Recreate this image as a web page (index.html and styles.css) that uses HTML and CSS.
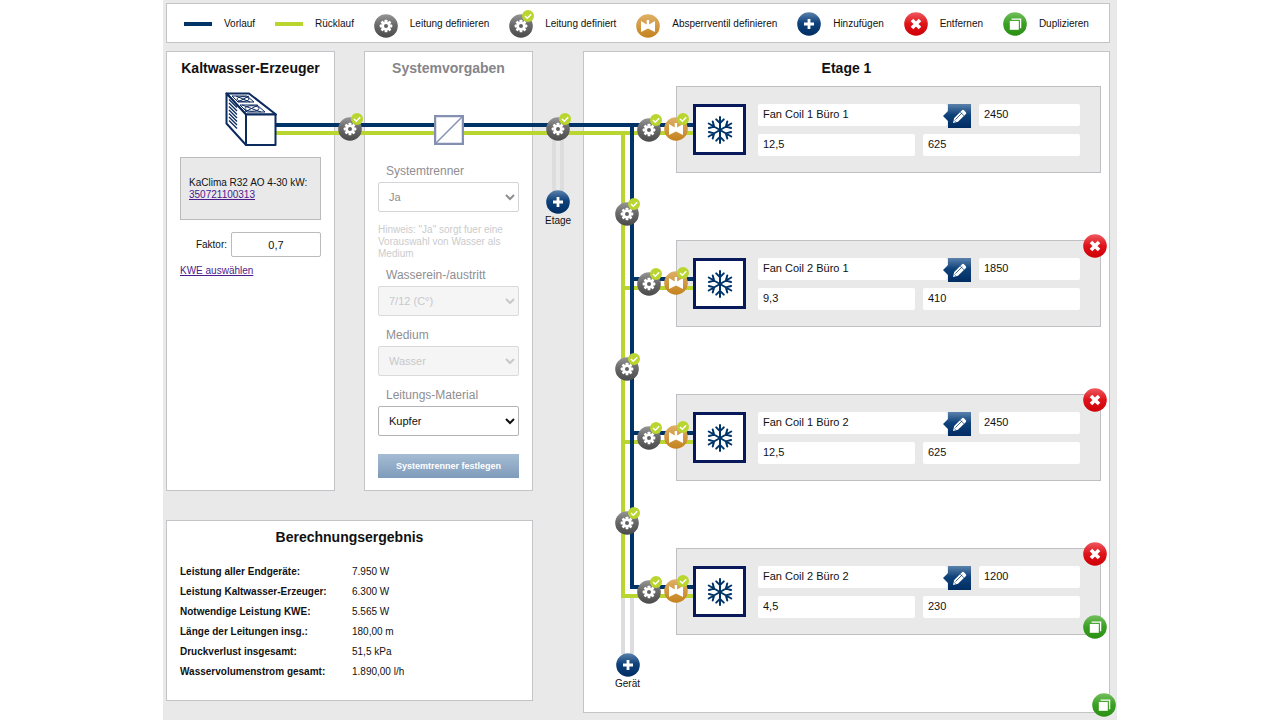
FILE: index.html
```html
<!DOCTYPE html>
<html lang="de">
<head>
<meta charset="utf-8">
<meta name="viewport" content="width=device-width, initial-scale=1">
<title>Kaltwasser-Konfigurator</title>
<link rel="stylesheet" href="styles.css">
</head>
<body>
<svg class="sprite" aria-hidden="true">
  <defs>
    <linearGradient id="g-gray" x1="0" y1="0" x2="0" y2="1"><stop offset="0" stop-color="#969696"/><stop offset=".45" stop-color="#6a6a6a"/><stop offset="1" stop-color="#4b4b4b"/></linearGradient>
    <linearGradient id="g-gold" x1="0" y1="0" x2="0" y2="1"><stop offset="0" stop-color="#deb068"/><stop offset="1" stop-color="#c4821c"/></linearGradient>
    <linearGradient id="g-blue" x1="0" y1="0" x2="0" y2="1"><stop offset="0" stop-color="#5b82ac"/><stop offset=".45" stop-color="#0f427b"/><stop offset="1" stop-color="#002d62"/></linearGradient>
    <linearGradient id="g-red" x1="0" y1="0" x2="0" y2="1"><stop offset="0" stop-color="#ee5a60"/><stop offset=".5" stop-color="#de1219"/><stop offset="1" stop-color="#cf0007"/></linearGradient>
    <linearGradient id="g-green" x1="0" y1="0" x2="0" y2="1"><stop offset="0" stop-color="#73bf5d"/><stop offset=".5" stop-color="#39a022"/><stop offset="1" stop-color="#2b8f14"/></linearGradient>
    <symbol id="tick" viewBox="0 0 12 12"><circle cx="6" cy="6" r="6" fill="#b9d530"/><path d="M3 6l2.300 2.200L9.200 4.300" fill="none" stroke="#fff" stroke-width="1.500"/></symbol>
    <symbol id="gear" viewBox="0 0 24 28">
      <circle cx="12" cy="16" r="11.800" fill="url(#g-gray)"/>
      <g fill="#fff" transform="translate(12 16)">
        <circle r="4.600"/>
        <g id="teeth"><rect x="-1.400" y="-6.300" width="2.800" height="12.600" rx=".6"/><rect x="-6.300" y="-1.400" width="12.600" height="2.800" rx=".6"/></g>
        <use href="#teeth" transform="rotate(45)"/>
        <circle r="2" fill="#626262"/>
      </g>
    </symbol>
    <symbol id="valve" viewBox="0 0 24 28">
      <circle cx="12" cy="16" r="11.800" fill="url(#g-gold)"/>
      <path d="M5 11l5.700 3.600V10h2.400v4.600L19 11V22l-7-3.400L5 22z" fill="#fff"/>
    </symbol>
    <symbol id="plus" viewBox="0 0 24 24"><circle cx="12" cy="12" r="11.800" fill="url(#g-blue)"/><path d="M12 7v10M7 12h10" stroke="#fff" stroke-width="2.800"/></symbol>
    <symbol id="cross" viewBox="0 0 24 24"><circle cx="12" cy="12" r="11.800" fill="url(#g-red)"/><path d="M8 8l8 8M16 8l-8 8" stroke="#fff" stroke-width="3.600"/></symbol>
    <symbol id="copy" viewBox="0 0 24 24"><circle cx="12" cy="12" r="11.800" fill="url(#g-green)"/><path d="M8.600 7.200h9v9" fill="none" stroke="#fff" stroke-width="1.300"/><rect x="6.800" y="9" width="9" height="8.800" fill="#fff"/></symbol>
    <symbol id="pencil" viewBox="0 0 28 24">
      <path d="M0 12l5-5V0h23v24H5v-7z" fill="url(#g-blue)"/>
      <path d="M10 19l1.200-5 7.600-7.600q1.200-1.200 2.400 0l1.500 1.500q1.200 1.200 0 2.400L15 17.800z" fill="#fff"/>
      <path d="M12.400 15.600l6.800-6.800M17.200 8l3.700 3.700M11.200 16.400l1.400 1.400" fill="none" stroke="#0f427b" stroke-width=".8"/>
    </symbol>
    <symbol id="flake" viewBox="0 0 30 30">
      <g fill="none" stroke="#003468" stroke-width="2" stroke-linecap="round">
        <path id="axis" d="M15 2v26M11.200 4.400L15 8.200l3.800-3.800M11.200 25.600l3.800-3.800 3.800 3.800"/>
        <use href="#axis" transform="rotate(60 15 15)"/>
        <use href="#axis" transform="rotate(120 15 15)"/>
      </g>
    </symbol>
  </defs>
</svg>

<div class="app">
  <ul class="legend">
    <li><span class="line supply"></span>Vorlauf</li>
    <li><span class="line return"></span>Rücklauf</li>
    <li><svg class="node-icon"><use href="#gear"/></svg>Leitung definieren</li>
    <li><svg class="node-icon"><use href="#gear"/><use href="#tick" x="13" width="12" height="12"/></svg>Leitung definiert</li>
    <li><svg class="node-icon"><use href="#valve"/></svg>Absperrventil definieren</li>
    <li><svg class="round-icon"><use href="#plus"/></svg>Hinzufügen</li>
    <li><svg class="round-icon"><use href="#cross"/></svg>Entfernen</li>
    <li><svg class="round-icon"><use href="#copy"/></svg>Duplizieren</li>
  </ul>

  <main class="board">
    <div class="left">
      <section class="panel source">
        <h2>Kaltwasser-Erzeuger</h2>
        <svg class="chiller" viewBox="0 0 52 55" aria-hidden="true">
          <g fill="#fff" stroke="#0b2a5e" stroke-width="2" stroke-linejoin="round">
            <path d="M1.500 1.500H24L51 22.500H21z"/>
            <path d="M1.500 1.500L21 22.500V53L1.500 31.500z"/>
            <path d="M21 22.500h29.500V53H21z"/>
          </g>
          <g fill="none" stroke="#0b2a5e" stroke-width="1">
            <path d="M7 4h15l7 6H13zM15 13h17l8 7H22z"/>
            <ellipse cx="18" cy="7" rx="6" ry="2.400"/><path d="M11 4l14 6M24 4L13 10"/>
            <ellipse cx="27" cy="16.500" rx="7" ry="2.800"/><path d="M17 13l19 7M33 13l-13 7"/>
            <path stroke-width="1.300" d="M4 7.500l8 8M4 11l8 8M4 14.500l8 8M4 18l8 8M4 21.500l8 8M4 25l8 8M4 28.500l8 8"/>
          </g>
        </svg>
        <p class="model">KaClima R32 AO 4-30 kW:<br><a href="#modell">350721100313</a></p>
        <div class="factor"><label for="faktor">Faktor:</label><input id="faktor" type="text" value="0,7"></div>
        <a class="choose" href="#kwe">KWE auswählen</a>
      </section>

      <section class="panel system">
        <h2>Systemvorgaben</h2>
        <svg class="separator" viewBox="0 0 30 30" aria-hidden="true"><path d="M1 1h28v28H1z" fill="#fff" stroke="#8490b2" stroke-width="2.500"/><path d="M2 28L28 2" stroke="#8490b2" stroke-width="1.500"/></svg>
        <label for="trenner">Systemtrenner</label>
        <select id="trenner" class="soft"><option>Ja</option></select>
        <p class="hint">Hinweis: "Ja" sorgt fuer eine Vorauswahl von Wasser als Medium</p>
        <label for="wasser">Wasserein-/austritt</label>
        <select id="wasser" disabled><option>7/12 (C°)</option></select>
        <label for="medium">Medium</label>
        <select id="medium" disabled><option>Wasser</option></select>
        <label for="material">Leitungs-Material</label>
        <select id="material"><option>Kupfer</option></select>
        <button class="submit" type="button">Systemtrenner festlegen</button>
      </section>

      <section class="panel result">
        <h2>Berechnungsergebnis</h2>
        <table>
          <tr><th scope="row">Leistung aller Endgeräte:</th><td>7.950 W</td></tr>
          <tr><th scope="row">Leistung Kaltwasser-Erzeuger:</th><td>6.300 W</td></tr>
          <tr><th scope="row">Notwendige Leistung KWE:</th><td>5.565 W</td></tr>
          <tr><th scope="row">Länge der Leitungen insg.:</th><td>180,00 m</td></tr>
          <tr><th scope="row">Druckverlust insgesamt:</th><td>51,5 kPa</td></tr>
          <tr><th scope="row">Wasservolumenstrom gesamt:</th><td>1.890,00 l/h</td></tr>
        </table>
      </section>
    </div>

    <section class="panel floor">
      <h2>Etage 1</h2>
      <div class="coils">
        <article class="coil">
          <button class="node pipe-node" aria-label="Leitung definiert"><svg class="node-icon"><use href="#gear"/><use href="#tick" x="13" width="12" height="12"/></svg></button>
          <button class="node valve-node" aria-label="Absperrventil"><svg class="node-icon"><use href="#valve"/><use href="#tick" x="13" width="12" height="12"/></svg></button>
          <div class="unit"><svg><use href="#flake"/></svg></div>
          <div class="fields">
            <div class="field-row"><div class="name"><input type="text" aria-label="Name" value="Fan Coil 1 Büro 1"><button aria-label="Bearbeiten"><svg><use href="#pencil"/></svg></button></div><input class="power" type="text" aria-label="Leistung" value="2450"></div>
            <div class="field-row"><input type="text" aria-label="Leitungslänge" value="12,5"><input type="text" aria-label="Volumenstrom" value="625"></div>
          </div>
        </article>
        <article class="coil">
          <button class="node pipe-node" aria-label="Leitung definiert"><svg class="node-icon"><use href="#gear"/><use href="#tick" x="13" width="12" height="12"/></svg></button>
          <button class="node valve-node" aria-label="Absperrventil"><svg class="node-icon"><use href="#valve"/><use href="#tick" x="13" width="12" height="12"/></svg></button>
          <div class="unit"><svg><use href="#flake"/></svg></div>
          <div class="fields">
            <div class="field-row"><div class="name"><input type="text" aria-label="Name" value="Fan Coil 2 Büro 1"><button aria-label="Bearbeiten"><svg><use href="#pencil"/></svg></button></div><input class="power" type="text" aria-label="Leistung" value="1850"></div>
            <div class="field-row"><input type="text" aria-label="Leitungslänge" value="9,3"><input type="text" aria-label="Volumenstrom" value="410"></div>
          </div>
          <button class="node remove" aria-label="Entfernen"><svg class="round-icon"><use href="#cross"/></svg></button>
        </article>
        <article class="coil">
          <button class="node pipe-node" aria-label="Leitung definiert"><svg class="node-icon"><use href="#gear"/><use href="#tick" x="13" width="12" height="12"/></svg></button>
          <button class="node valve-node" aria-label="Absperrventil"><svg class="node-icon"><use href="#valve"/><use href="#tick" x="13" width="12" height="12"/></svg></button>
          <div class="unit"><svg><use href="#flake"/></svg></div>
          <div class="fields">
            <div class="field-row"><div class="name"><input type="text" aria-label="Name" value="Fan Coil 1 Büro 2"><button aria-label="Bearbeiten"><svg><use href="#pencil"/></svg></button></div><input class="power" type="text" aria-label="Leistung" value="2450"></div>
            <div class="field-row"><input type="text" aria-label="Leitungslänge" value="12,5"><input type="text" aria-label="Volumenstrom" value="625"></div>
          </div>
          <button class="node remove" aria-label="Entfernen"><svg class="round-icon"><use href="#cross"/></svg></button>
        </article>
        <article class="coil">
          <button class="node pipe-node" aria-label="Leitung definiert"><svg class="node-icon"><use href="#gear"/><use href="#tick" x="13" width="12" height="12"/></svg></button>
          <button class="node valve-node" aria-label="Absperrventil"><svg class="node-icon"><use href="#valve"/><use href="#tick" x="13" width="12" height="12"/></svg></button>
          <div class="unit"><svg><use href="#flake"/></svg></div>
          <div class="fields">
            <div class="field-row"><div class="name"><input type="text" aria-label="Name" value="Fan Coil 2 Büro 2"><button aria-label="Bearbeiten"><svg><use href="#pencil"/></svg></button></div><input class="power" type="text" aria-label="Leistung" value="1200"></div>
            <div class="field-row"><input type="text" aria-label="Leitungslänge" value="4,5"><input type="text" aria-label="Volumenstrom" value="230"></div>
          </div>
          <button class="node remove" aria-label="Entfernen"><svg class="round-icon"><use href="#cross"/></svg></button>
          <button class="node duplicate" aria-label="Gerät duplizieren"><svg class="round-icon"><use href="#copy"/></svg></button>
        </article>
      </div>
      <button class="node duplicate-floor" aria-label="Etage duplizieren"><svg class="round-icon"><use href="#copy"/></svg></button>
    </section>

    <svg class="pipes" aria-hidden="true">
      <g fill="none" stroke-width="4">
        <path stroke="#dddddf" d="M388 89v52M396 89v52M457 547v56M466 547v56"/>
        <path stroke="#b9d530" d="M110 82H528M457 84V545H528M457 237H528M457 391H528"/>
        <path stroke="#003468" d="M110 74H528M466 76V536H528M466 228H528M466 382H528"/>
      </g>
    </svg>
    <button class="node main-a" aria-label="Leitung definiert"><svg class="node-icon"><use href="#gear"/><use href="#tick" x="13" width="12" height="12"/></svg></button>
    <button class="node main-b" aria-label="Leitung definiert"><svg class="node-icon"><use href="#gear"/><use href="#tick" x="13" width="12" height="12"/></svg></button>
    <button class="node riser-a" aria-label="Leitung definiert"><svg class="node-icon"><use href="#gear"/><use href="#tick" x="13" width="12" height="12"/></svg></button>
    <button class="node riser-b" aria-label="Leitung definiert"><svg class="node-icon"><use href="#gear"/><use href="#tick" x="13" width="12" height="12"/></svg></button>
    <button class="node riser-c" aria-label="Leitung definiert"><svg class="node-icon"><use href="#gear"/><use href="#tick" x="13" width="12" height="12"/></svg></button>
    <button class="node add add-floor"><svg class="round-icon"><use href="#plus"/></svg>Etage</button>
    <button class="node add add-unit"><svg class="round-icon"><use href="#plus"/></svg>Gerät</button>
  </main>
</div>
</body>
</html>
```
FILE: styles.css
```css
* { box-sizing: border-box; }

body {
  margin: 0;
  background: #fff;
  color: #111;
  font: 10px/12px "Liberation Sans", Arial, sans-serif;
}

h2, p, ul { margin: 0; padding: 0; }
button, input, select { font-family: inherit; color: inherit; margin: 0; }
button { border: 0; padding: 0; background: none; cursor: pointer; }
svg { display: block; }
a { color: #4b1a8c; }

.sprite { position: absolute; width: 0; height: 0; }

.app {
  max-width: 954px;
  min-height: 100vh;
  margin: 0 auto;
  padding: 3px 7px 7px 3px;
  background: #e9e9ea;
}

.legend {
  display: flex;
  flex-wrap: wrap;
  justify-content: space-between;
  align-items: center;
  min-height: 40px;
  margin-bottom: 8px;
  padding: 1px 20px 0 17px;
  list-style: none;
  background: #fff;
  border: 1px solid #c4c4c8;
}
.legend li { display: flex; align-items: center; gap: 12px; }
.line { width: 28px; height: 4px; }
.supply { background: #003468; }
.return { background: #b9d530; }

.node-icon { width: 24px; height: 28px; overflow: visible; }
.round-icon { width: 24px; height: 24px; }

.board {
  position: relative;
  display: grid;
  grid-template-columns: 367px 1fr;
  gap: 50px;
}
.left {
  display: grid;
  grid-template-columns: 1fr 1fr;
  grid-template-rows: 440px auto;
  gap: 29px;
  align-content: start;
}

.panel { background: #fff; border: 1px solid #c4c4c8; }
.panel h2 {
  text-align: center;
  font-size: 14px;
  line-height: 16px;
}

.source, .system { padding: 8px 13px; display: flex; flex-direction: column; }
.chiller { width: 52px; height: 55px; margin: 16px auto 10px; position: relative; z-index: 2; }
.model {
  padding: 19px 8px 18px;
  background: #e9e9ea;
  border: 1px solid #bbb;
  white-space: nowrap;
}
.factor {
  display: flex;
  align-items: center;
  justify-content: flex-end;
  gap: 4px;
  margin: 12px 0 8px;
}
.factor input {
  width: 90px;
  height: 25px;
  text-align: center;
  font-size: 11px;
  border: 1px solid #bbb;
  border-radius: 2px;
}
.choose { align-self: flex-start; }

.system h2 { color: #85858a; }
.separator { width: 30px; height: 30px; margin: 39px auto 19px; position: relative; z-index: 2; }
.system label {
  padding-left: 8px;
  color: #8e8e92;
  font-size: 12px;
  line-height: 14px;
  margin-bottom: 4px;
}
.system select {
  flex: none;
  height: 30px;
  padding: 0 0 0 6px;
  margin-bottom: 12px;
  font-size: 11px;
  background: #fff;
  border: 1px solid #b4b4b8;
  border-radius: 2px;
}
.system .soft { color: #8e8e92; border-color: #d4d4d8; }
.system select:disabled { color: #c8c8ca; background: #f5f5f6; border-color: #dadadc; opacity: 1; }
.hint { color: #cbcbcd; margin-bottom: 8px; }
.submit {
  height: 24px;
  margin-top: 6px;
  color: #fff;
  font-size: 9px;
  font-weight: bold;
  background: linear-gradient(#a5bcd3, #7f9bbb);
}

.result { grid-column: 1 / -1; padding: 8px 13px 18px; }
.result table { margin-top: 17px; border-collapse: collapse; }
.result th, .result td { height: 20px; padding: 0; text-align: left; }
.result th { width: 172px; }

.floor { position: relative; padding: 8px 8px 77px; }
.coils { display: grid; gap: 67px; margin: 10px 0 0 84px; }
.coil {
  position: relative;
  display: flex;
  gap: 12px;
  padding: 17px 20px 16px 16px;
  background: #e9e9ea;
  border: 1px solid #c0c0c4;
}
.unit {
  position: relative;
  z-index: 2;
  flex: none;
  display: grid;
  place-items: center;
  width: 53px;
  height: 51px;
  background: #fff;
  border: 3px solid #07195a;
}
.unit svg { width: 30px; height: 30px; }
.fields { flex: 1; display: grid; gap: 8px; align-content: start; }
.field-row { display: flex; gap: 8px; }
.field-row input {
  flex: 1;
  min-width: 0;
  width: 100%;
  height: 22px;
  padding: 0 5px 2px;
  font-size: 11px;
  background: #fff;
  border: 0;
  border-radius: 2px;
}
.name { position: relative; flex: 1; display: flex; padding-right: 24px; }
.name button { position: absolute; right: 0; top: 0; }
.name svg { width: 28px; height: 24px; }
.field-row .power { flex: 0 0 101px; }

.node { position: absolute; z-index: 3; }
.pipe-node { left: -40px; top: 27px; }
.valve-node { left: -13px; top: 26px; }
.remove { right: -7px; top: -7px; }
.duplicate { right: -7px; bottom: -5px; }
.duplicate-floor { right: -7px; bottom: -5px; }

.pipes {
  position: absolute;
  z-index: 1;
  left: 0;
  top: 0;
  width: 530px;
  height: 610px;
  pointer-events: none;
}
.main-a { left: 172px; top: 62px; }
.main-b { left: 380px; top: 62px; }
.riser-a { left: 449px; top: 147px; }
.riser-b { left: 449px; top: 302px; }
.riser-c { left: 449px; top: 456px; }
.add { display: grid; justify-items: center; gap: 1px; font-size: 10px; line-height: 12px; }
.add-floor { left: 379px; top: 139px; }
.add-unit { left: 449px; top: 602px; }
```
